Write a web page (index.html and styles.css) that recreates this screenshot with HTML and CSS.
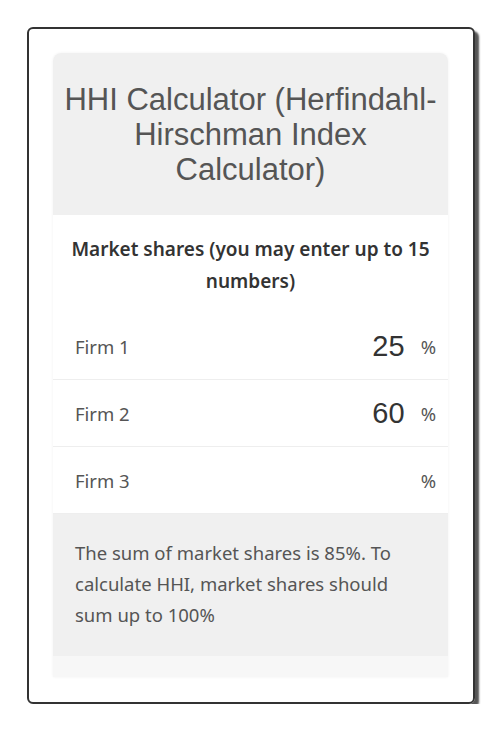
FILE: index.html
```html
<!DOCTYPE html>
<html lang="en">
<head>
    <meta charset="UTF-8">
    <title>HHI Calculator</title>
    <link rel="stylesheet" href="styles.css">
</head>
<body>
    <div class="card">
        <div class="panel">
            <div class="header">
                <h1>HHI Calculator (Herfindahl-Hirschman Index Calculator)</h1>
            </div>

            <div class="section-title">Market shares (you may enter up to 15 numbers)</div>

            <div class="row">
                <span class="label">Firm 1</span>
                <span class="value">25</span>
                <span class="unit">%</span>
            </div>
            <div class="row">
                <span class="label">Firm 2</span>
                <span class="value">60</span>
                <span class="unit">%</span>
            </div>
            <div class="row">
                <span class="label">Firm 3</span>
                <span class="value"></span>
                <span class="unit">%</span>
            </div>

            <div class="result">
                The sum of market shares is 85%. To calculate HHI, market shares should sum up to 100%
            </div>
            <div class="footer"></div>
        </div>
    </div>
</body>
</html>
```

FILE: styles.css
```css
body {
    margin: 0;
    background-color: #fff;
    font-family: "Noto Sans", "Open Sans", sans-serif;
}
.card {
    margin: 27px 0 0 27px;
    width: 448px;
    height: 677px;
    border: 2px solid #333;
    border-radius: 6px;
    box-shadow: 4px 4px 2px #555;
    padding: 24px 25px 0 24px;
    box-sizing: border-box;
}
.panel {
    border-radius: 8px 8px 0 0;
    overflow: hidden;
    box-shadow: 0 0 3px rgba(0, 0, 0, 0.06);
}
.header {
    background-color: #f0f0f0;
    height: 162px;
    display: flex;
    align-items: center;
    justify-content: center;
}
.header h1 {
    margin: 0;
    font-family: "Liberation Sans", Arial, sans-serif;
    font-weight: normal;
    font-size: 31px;
    line-height: 35px;
    color: #555;
    text-align: center;
    padding: 0 6px;
}
.section-title {
    text-align: center;
    font-size: 19px;
    font-weight: 600;
    line-height: 32px;
    color: #333;
    padding: 18px 10px 16px;
}
.row {
    display: flex;
    align-items: center;
    height: 66px;
    padding: 0 12px 0 22px;
    border-bottom: 1px solid #eee;
}
.row:last-of-type {
    border-bottom: none;
}
.label {
    flex: 1;
    font-size: 18.5px;
    color: #555;
}
.value {
    font-family: "Liberation Sans", Arial, sans-serif;
    font-size: 29px;
    color: #333;
    margin-right: 16px;
}
.unit {
    font-size: 18.5px;
    color: #555;
}
.result {
    background-color: #f0f0f0;
    padding: 23px 24px 24px 22px;
    height: 95px;
    font-size: 18.5px;
    line-height: 31px;
    color: #555;
}
.footer {
    background-color: #f7f7f7;
    height: 21px;
}
```
